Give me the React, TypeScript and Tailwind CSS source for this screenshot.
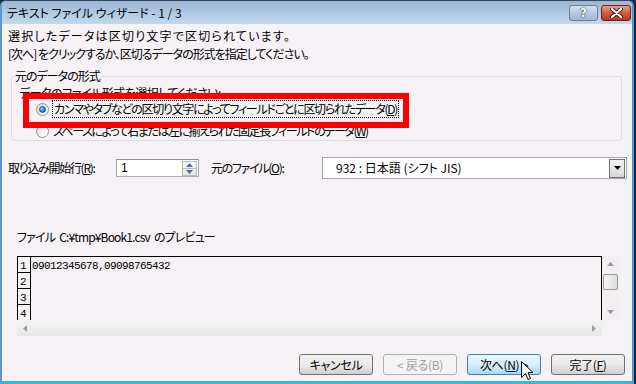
import React from "react";

const jp = "font-['Noto_Sans_CJK_JP','Noto_Sans',sans-serif] [font-feature-settings:'palt']";

function Radio({ checked }: { checked?: boolean }) {
  return (
    <span className="flex size-[13px] shrink-0 items-center justify-center rounded-full border border-[#8f9192] bg-[linear-gradient(135deg,#d6d6d6,#f8f8f8_70%,#ffffff)]">
      {checked && (
        <span className="size-[7px] rounded-full border border-[#1a4f86] bg-[radial-gradient(circle_at_35%_35%,#a6dcff,#2a7ad0_60%,#1a55a0)]" />
      )}
    </span>
  );
}

function Btn({ label, state }: { label: React.ReactNode; state?: "disabled" | "hover" }) {
  const cls =
    state === "disabled"
      ? "border-[#adb2b5] bg-[#f4f4f4] text-[#a0a0a0]"
      : state === "hover"
      ? "border-[#3c7fb1] bg-linear-to-b from-[#eaf6fd] via-[#d9f0fc] to-[#a7d9f5] text-black"
      : "border-[#707070] bg-linear-to-b from-[#f2f2f2] via-[#ebebeb] to-[#cfcfcf] text-black";
  return (
    <div className={`flex h-[21px] w-[74px] items-center justify-center rounded-[3px] border tracking-[-0.3px] ${cls}`}>
      {label}
    </div>
  );
}

function Arrow({ dir }: { dir: "up" | "down" | "left" | "right" }) {
  const pts = {
    up: "0,4 3.5,0 7,4",
    down: "0,0 3.5,4 7,0",
    left: "4,0 0,3.5 4,7",
    right: "0,0 4,3.5 0,7",
  }[dir];
  const w = dir === "up" || dir === "down" ? 7 : 4;
  const h = dir === "up" || dir === "down" ? 4 : 7;
  return (
    <svg width={w} height={h} viewBox={`0 0 ${w} ${h}`}>
      <polygon points={pts} fill="#9a9a9a" />
    </svg>
  );
}

export default function App() {
  return (
    <div className={`relative flex h-[384px] w-[636px] overflow-hidden bg-[#1e2833] text-[12px] text-black ${jp}`}>
      {/* window frame */}
      <div className="flex h-full w-[634px] flex-col overflow-hidden rounded-t-[6px] border-t border-l-[2px] border-r-[2px] border-b-[3px] border-t-[#3c4857] border-l-[#5e95cf] border-r-[#4a9ad4] border-b-[#38b6e2] bg-[#f5f1f5]">
        {/* title bar */}
        <div className="flex h-[23px] shrink-0 items-center bg-linear-to-b from-[#9bb6d4] to-[#c4d9ef] pl-[5px] pr-[1px]">
          <span className="leading-[16px]">テキスト ファイル ウィザード - 1 / 3</span>
          <div className="ml-auto flex items-center gap-[3px] pt-[1px]">
            <div className="flex h-[16px] w-[29px] items-center justify-center rounded-[3px] border border-[#6f7d91] bg-linear-to-b from-[#d3e2f1] via-[#b4c9df] to-[#9fb8d3]">
              <span className="font-['DejaVu_Sans',sans-serif] text-[12px] font-bold leading-none text-white [text-shadow:0_0_1px_#303848,0_0_1px_#303848,0_0_1px_#303848]">?</span>
            </div>
            <div className="flex h-[16px] w-[30px] items-center justify-center rounded-[3px] border border-[#6e2318] bg-linear-to-b from-[#e8a08e] via-[#d05a40] to-[#b83a22]">
              <svg width="13" height="10" viewBox="0 0 13 10">
                <path d="M2 1 L11 9 M11 1 L2 9" stroke="#3a1a16" strokeWidth="4" strokeLinecap="round" />
                <path d="M2 1 L11 9 M11 1 L2 9" stroke="#ffffff" strokeWidth="2.2" strokeLinecap="round" />
              </svg>
            </div>
          </div>
        </div>

        {/* body */}
        <div className="flex flex-1 flex-col">
          <div className="ml-[6px] mt-[4px] h-[16px] leading-[16px] tracking-[1.2px]">選択したデータは区切り文字で区切られています。</div>
          <div className="ml-[6px] mt-[2px] h-[16px] leading-[16px] tracking-[-1px]">[次へ] をクリックするか、区切るデータの形式を指定してください。</div>

          <fieldset className="ml-[9px] mt-[8px] h-[71px] w-[611px] rounded-[3px] border border-[#d5dfe5] pl-[2px]">
            <legend className="px-[1px] leading-[12px] tracking-[-1px]">元のデータの形式</legend>
            <div className="ml-[5px] mt-[4px] h-[13px] leading-[13px] tracking-[-0.5px]">データのファイル形式を選択してください:</div>
            <div className="ml-[22px] mt-[1px] flex h-[18px] items-center gap-[3px]">
              <Radio checked />
              <span className="border border-dotted border-black px-[1px] leading-[16px] tracking-[-1.3px]">
                カンマやタブなどの区切り文字によってフィールドごとに区切られたデータ(<span className="underline">D</span>)
              </span>
            </div>
            <div className="ml-[22px] mt-[5px] flex h-[16px] items-center gap-[4px]">
              <Radio />
              <span className="leading-[16px] tracking-[-1.45px]">
                スペースによって右または左に揃えられた固定長フィールドのデータ(<span className="underline">W</span>)
              </span>
            </div>
          </fieldset>

          {/* start row + file origin */}
          <div className="mt-[16px] flex h-[22px] items-center">
            <span className="ml-[6px] w-[108px] tracking-[-1.3px]">
              取り込み開始行(<span className="underline">R</span>):
            </span>
            <div className="flex h-[18px] w-[83px] items-center border border-[#abadb3] border-t-[#8e9298] bg-white pl-[4px] pr-[1px]">
              <span className="font-['Liberation_Sans',sans-serif]">1</span>
              <div className="ml-auto flex h-[15px] w-[15px] flex-col border border-[#b8bcc2] bg-linear-to-b from-[#fbfbfb] to-[#e4e4e4]">
                <div className="flex flex-1 items-center justify-center border-b border-[#b8bcc2]">
                  <svg width="7" height="4" viewBox="0 0 7 4"><polygon points="0,4 3.5,0 7,4" fill="#4d6f99" /></svg>
                </div>
                <div className="flex flex-1 items-center justify-center">
                  <svg width="7" height="4" viewBox="0 0 7 4"><polygon points="0,0 3.5,4 7,0" fill="#4d6f99" /></svg>
                </div>
              </div>
            </div>
            <span className="ml-[12px] w-[111px] tracking-[-1.3px]">
              元のファイル(<span className="underline">O</span>):
            </span>
            <div className="flex h-[22px] w-[305px] items-center border border-[#a6a8ac] bg-white pl-[13px] pr-[1px]">
              <span>932 : 日本語 (シフト JIS)</span>
              <div className="ml-auto flex h-[19px] w-[16px] items-center justify-center border border-[#707070] bg-linear-to-b from-[#f4f4f4] to-[#d8d8d8]">
                <svg width="7" height="4" viewBox="0 0 7 4"><polygon points="0,0 3.5,4 7,0" fill="#000" /></svg>
              </div>
            </div>
          </div>

          <div className="ml-[15px] mt-[50px] h-[16px] leading-[16px] tracking-[-0.85px]">
            ファイル<span className="ml-[4px]">C:¥tmp¥Book1.csv</span><span className="ml-[4px]">のプレビュー</span>
          </div>

          {/* preview */}
          <div className="ml-[15px] mt-[11px] flex w-[602px] flex-col">
            <div className="flex h-[64px]">
              <div className="flex w-[585px] overflow-hidden border-t border-l border-r border-black">
                <div className="flex w-[13px] shrink-0 flex-col border-r border-black">
                  {["1", "2", "3", "4"].map((n) => (
                    <div key={n} className="flex h-[16px] shrink-0 items-end border-b border-black pl-[2px] font-['Liberation_Mono',monospace] text-[11px] leading-[12px]">
                      {n}
                    </div>
                  ))}
                </div>
                <div className="pl-[1px] pt-[3px] font-['Liberation_Mono',monospace] text-[11px] leading-[12px] tracking-[-0.6px]">
                  09012345678,09098765432
                </div>
              </div>
              <div className="flex w-[17px] flex-col items-center bg-[#f1eff1]">
                <div className="flex h-[16px] items-center justify-center"><Arrow dir="up" /></div>
                <div className="mt-[2px] h-[16px] w-[15px] rounded-[2px] border border-[#9a9a9a] bg-linear-to-r from-[#f4f4f4] to-[#dcdcdc]" />
                <div className="mt-auto flex h-[16px] items-center justify-center"><Arrow dir="down" /></div>
              </div>
            </div>
            <div className="flex h-[16px] w-[585px] items-center justify-between bg-linear-to-b from-[#f4f4f4] to-[#e9e7e9] px-[6px]">
              <Arrow dir="left" />
              <Arrow dir="right" />
            </div>
          </div>

          {/* buttons */}
          <div className="ml-[297px] mt-[18px] flex gap-[10px]">
            <Btn label="キャンセル" />
            <Btn label="< 戻る(B)" state="disabled" />
            <Btn label={<span>次へ(<span className="underline">N</span>) &gt;</span>} state="hover" />
            <Btn label={<span>完了(<span className="underline">F</span>)</span>} />
          </div>
        </div>
      </div>

      {/* annotation overlay */}
      <div className="absolute left-[23px] top-[93px] h-[35px] w-[386px] border-[6px] border-[#ff0000]" />

      {/* mouse pointer */}
      <svg className="absolute left-[521px] top-[361px]" width="13" height="21" viewBox="0 0 13 21">
        <path d="M0.5 0.5 L0.5 16.5 L4.5 12.5 L7 18.5 L9.5 17.5 L7 11.5 L12 11.5 Z" fill="#fff" stroke="#000" strokeWidth="1" strokeLinejoin="miter" />
      </svg>
    </div>
  );
}
